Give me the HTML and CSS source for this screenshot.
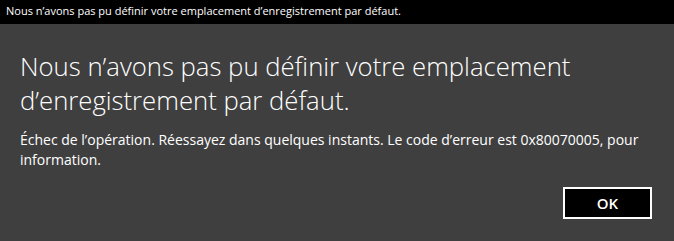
FILE: index.html
```html
<!DOCTYPE html>
<html lang="fr">
<head>
    <meta charset="utf-8">
    <title>Emplacement d'enregistrement</title>
    <link rel="stylesheet" href="styles.css">
</head>
<body>
    <div class="title_bar">Nous n’avons pas pu définir votre emplacement d’enregistrement par défaut.</div>

    <div class="dialog">
        <h1 class="dialog_title">Nous n’avons pas pu définir votre emplacement d’enregistrement par défaut.</h1>
        <p class="dialog_text">Échec de l’opération. Réessayez dans quelques instants. Le code d’erreur est 0x80070005, pour information.</p>
        <div class="dialog_buttons">
            <button class="ok_button">OK</button>
        </div>
    </div>
</body>
</html>
```

FILE: styles.css
```css
body {
    margin: 0;
    background-color: #3f3f3f;
    color: #ffffff;
    font-family: "Open Sans", "Noto Sans", sans-serif;
}

.title_bar {
    height: 24px;
    background-color: #000000;
    font-size: 11px;
    line-height: 21px;
    padding-left: 6px;
}

.dialog {
    padding: 26px 22px 0 20px;
}

.dialog_title {
    margin: 0;
    max-width: 600px;
    font-size: 25.7px;
    font-weight: 300;
    line-height: 34px;
}

.dialog_text {
    margin: 12px 0 0 0;
    max-width: 632px;
    font-size: 14px;
    line-height: 20px;
}

.dialog_buttons {
    display: flex;
    justify-content: flex-end;
    margin-top: 17px;
}

.ok_button {
    width: 89px;
    height: 32px;
    background-color: #000000;
    border: 2px solid #ffffff;
    color: #ffffff;
    font-family: "Open Sans", "Noto Sans", sans-serif;
    font-size: 15px;
    font-weight: 600;
}
```
